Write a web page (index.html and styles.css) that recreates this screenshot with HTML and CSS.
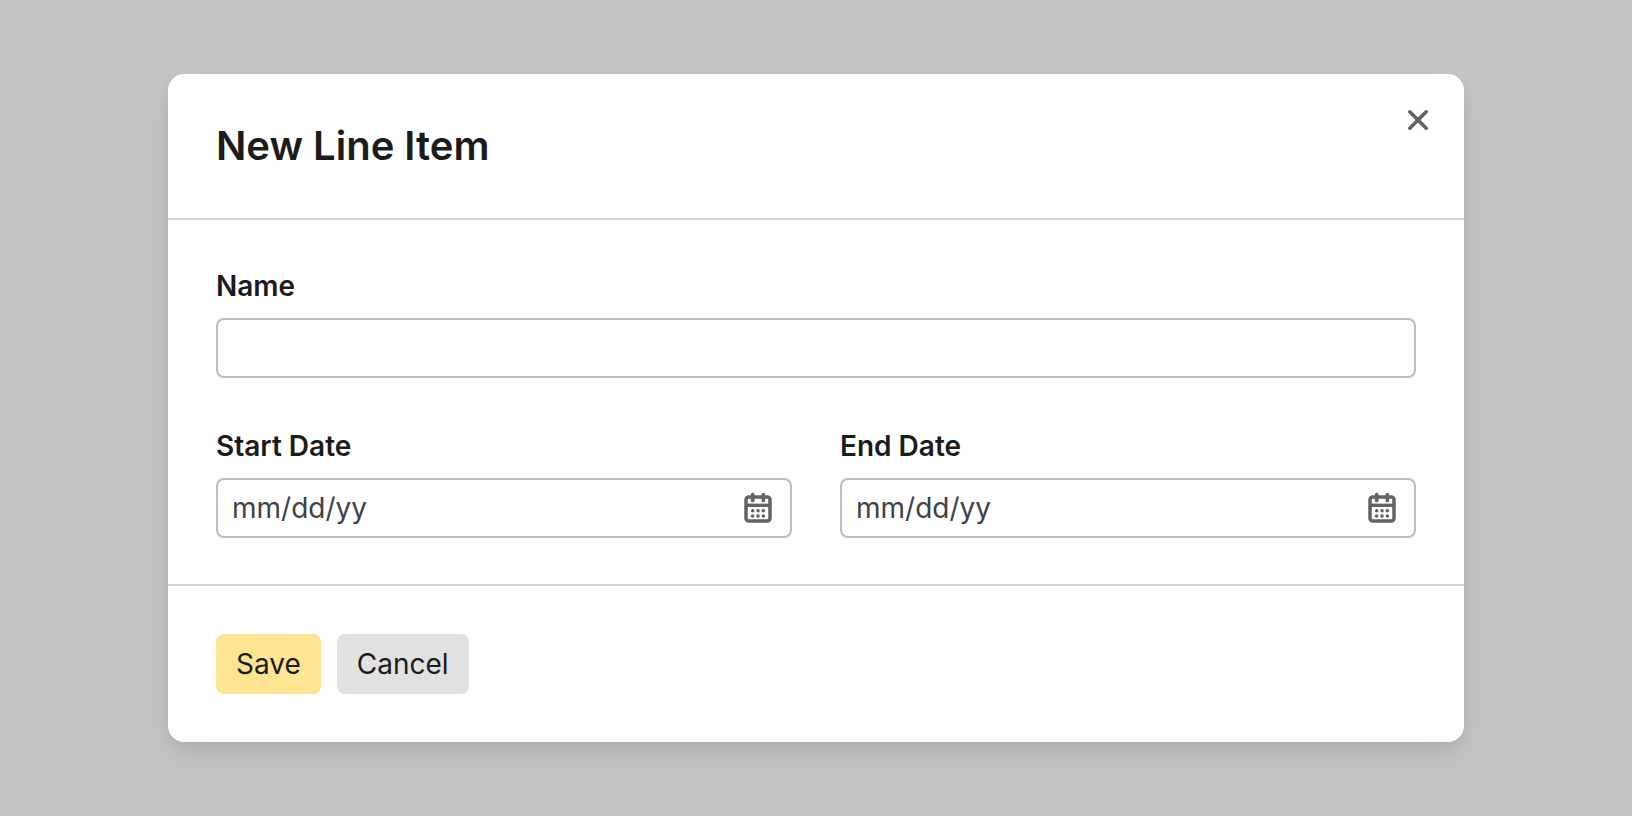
FILE: index.html
```html
<!DOCTYPE html>
<html lang="en">
<head>
<meta charset="utf-8">
<meta name="viewport" content="width=device-width, initial-scale=1">
<title>New Line Item</title>
<link rel="stylesheet" href="styles.css">
</head>
<body class="page">
<svg class="sprite">
  <symbol id="calendar" viewBox="0 0 32 32">
    <rect x="4" y="5" width="24" height="24" rx="2.8" fill="none" stroke="currentColor" stroke-width="3.5"/>
    <path d="M4 13.3h24" stroke="currentColor" stroke-width="3.4"/>
    <path d="M10.7 2.6v5.8M21.3 2.6v5.8" stroke="currentColor" stroke-width="3.7" stroke-linecap="round"/>
    <g fill="currentColor">
      <circle cx="10.7" cy="18.7" r="1.8"/><circle cx="16" cy="18.7" r="1.8"/><circle cx="21.3" cy="18.7" r="1.8"/>
      <circle cx="10.7" cy="24" r="1.8"/><circle cx="16" cy="24" r="1.8"/><circle cx="21.3" cy="24" r="1.8"/>
    </g>
  </symbol>
</svg>
<form class="modal" role="dialog" aria-labelledby="modal-title">
  <header class="modal-header">
    <h1 class="modal-title" id="modal-title">New Line Item</h1>
    <button class="close" type="button" aria-label="Close">
      <svg class="icon" viewBox="0 0 32 32" aria-hidden="true"><path d="M7.8 7.8l16.4 16.4M24.2 7.8L7.8 24.2" fill="none" stroke="currentColor" stroke-width="3.6" stroke-linecap="round"/></svg>
    </button>
  </header>
  <div class="modal-body">
    <div class="field">
      <label class="label" for="name">Name</label>
      <div class="control"><input class="input" id="name" type="text"></div>
    </div>
    <div class="row">
      <div class="field">
        <label class="label" for="start">Start Date</label>
        <div class="control">
          <input class="input" id="start" type="text" placeholder="mm/dd/yy">
          <svg class="icon" aria-hidden="true"><use href="#calendar"/></svg>
        </div>
      </div>
      <div class="field">
        <label class="label" for="end">End Date</label>
        <div class="control">
          <input class="input" id="end" type="text" placeholder="mm/dd/yy">
          <svg class="icon" aria-hidden="true"><use href="#calendar"/></svg>
        </div>
      </div>
    </div>
  </div>
  <footer class="modal-footer">
    <button class="button button-primary" type="submit">Save</button>
    <button class="button" type="button">Cancel</button>
  </footer>
</form>
</body>
</html>
```
FILE: styles.css
```css
*,
*::before,
*::after {
  box-sizing: border-box;
}

.page {
  margin: 0;
  min-height: 100vh;
  padding: 48px 168px;
  display: flex;
  align-items: center;
  background: #c4c4c4;
  color: #1b1b1b;
  font-family: Inter, "Liberation Sans", sans-serif;
  font-size: 28px;
  line-height: 40px;
}

.sprite {
  display: none;
}

.modal {
  flex: 1;
  min-width: 0;
  background: #fff;
  border-radius: 16px;
  box-shadow: 0 16px 32px -4px rgba(0, 0, 0, 0.09), 0 4px 12px rgba(0, 0, 0, 0.06);
}

.modal-header {
  position: relative;
  padding: 48px;
  border-bottom: 2px solid #d4d4d4;
}

.modal-title {
  margin: 0;
  font-size: 40px;
  font-weight: 600;
  line-height: 48px;
}

.close {
  position: absolute;
  top: 30px;
  right: 30px;
  display: flex;
  padding: 0;
  border: 0;
  background: none;
  color: #636361;
  cursor: pointer;
}

.icon {
  flex: none;
  display: block;
  width: 32px;
  height: 32px;
}

.modal-body {
  display: grid;
  gap: 48px;
  padding: 46px 48px;
}

.row {
  display: grid;
  grid-template-columns: repeat(2, minmax(0, 1fr));
  gap: 48px;
}

.field {
  display: flex;
  flex-direction: column;
  gap: 12px;
  min-width: 0;
}

.label {
  font-weight: 600;
}

.control {
  display: flex;
  align-items: center;
  height: 60px;
  padding: 0 16px 0 14px;
  border: 2px solid #bcbcbc;
  border-radius: 8px;
  color: #636361;
}

.control:focus-within {
  border-color: #636361;
}

.input {
  flex: 1;
  min-width: 0;
  padding: 0;
  border: 0;
  outline: 0;
  background: none;
  color: #1b1b1b;
  font: inherit;
}

.input::placeholder {
  color: #41413f;
  opacity: 1;
}

.modal-footer {
  display: flex;
  gap: 16px;
  padding: 48px;
  border-top: 2px solid #d4d4d4;
}

.button {
  padding: 10px 20px;
  border: 0;
  border-radius: 8px;
  background: #e1e1e1;
  color: #1b1b1b;
  font: inherit;
  cursor: pointer;
}

.button-primary {
  background: #fde592;
}
```
